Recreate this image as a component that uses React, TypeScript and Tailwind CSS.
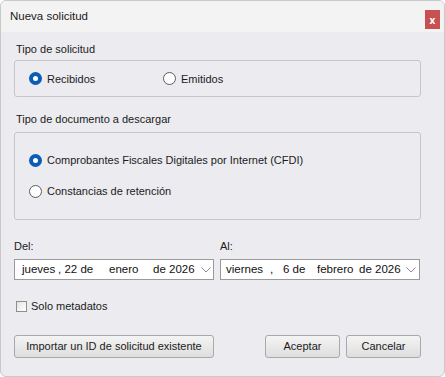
import { useState } from 'react';

const ui = "font-['Liberation_Sans','Noto_Sans',sans-serif]";
const tah = "font-['Liberation_Sans','DejaVu_Sans',sans-serif]";

const Radio = ({ checked, label, onClick }: { checked: boolean; label: string; onClick: () => void }) => (
  <button type="button" onClick={onClick} className="flex items-center gap-[5px] text-left">
    {checked ? (
      <span className="flex h-[13px] w-[13px] items-center justify-center rounded-full bg-[#0a5cb5]">
        <span className="h-[5px] w-[5px] rounded-full bg-white" />
      </span>
    ) : (
      <span className="h-[13px] w-[13px] rounded-full border border-[#5c5c5c] bg-white" />
    )}
    <span className={`${ui} text-[11px] leading-[16px] text-[#1b1b1b]`}>{label}</span>
  </button>
);

const Chevron = () => (
  <svg width="10" height="6" viewBox="0 0 10 6" className="shrink-0">
    <path d="M0.5 0.5 L5 5 L9.5 0.5" fill="none" stroke="#8a8a8a" strokeWidth="1" />
  </svg>
);

const btnClass = `${tah} h-[23px] rounded-[3px] border border-[#a9a9a9] bg-gradient-to-b from-[#f4f4f4] to-[#dedede] text-[11px] text-[#1b1b1b]`;

export default function App() {
  const [origin, setOrigin] = useState<'recibidos' | 'emitidos'>('recibidos');
  const [docType, setDocType] = useState<'cfdi' | 'retencion'>('cfdi');
  const [onlyMeta, setOnlyMeta] = useState(false);

  return (
    <div className="h-[377px] w-[445px] overflow-hidden rounded-[6px] border border-[#c9c9c9] bg-[#ebebf0]">
      {/* title bar */}
      <div className="flex h-[31px] items-center justify-between bg-[#f3f3f3] pl-[9px] pr-[4px]">
        <span className={`${ui} text-[11.5px] text-[#1a1a1a]`}>Nueva solicitud</span>
        <button
          type="button"
          className="mt-[6px] flex h-[19px] w-[15px] items-center justify-center bg-[#c75050] text-[10px] font-bold leading-none text-white"
        >
          x
        </button>
      </div>

      <div className="pl-[13px]">
        <p className={`${ui} mt-[9px] pl-[2px] text-[11px] leading-[16px] text-[#1b1b1b]`}>Tipo de solicitud</p>
        <div className="mt-[3px] flex h-[37px] w-[407px] items-center rounded-[3px] border border-[#c6c6c9] pl-[14px]">
          <div className="w-[134px]">
            <Radio checked={origin === 'recibidos'} label="Recibidos" onClick={() => setOrigin('recibidos')} />
          </div>
          <Radio checked={origin === 'emitidos'} label="Emitidos" onClick={() => setOrigin('emitidos')} />
        </div>

        <p className={`${ui} mt-[14px] pl-[2px] text-[11px] leading-[16px] text-[#1b1b1b]`}>
          Tipo de documento a descargar
        </p>
        <div className="mt-[5px] flex h-[88px] w-[407px] flex-col gap-[15px] rounded-[3px] border border-[#c6c6c9] pl-[14px] pt-[19px]">
          <Radio
            checked={docType === 'cfdi'}
            label="Comprobantes Fiscales Digitales por Internet (CFDI)"
            onClick={() => setDocType('cfdi')}
          />
          <Radio
            checked={docType === 'retencion'}
            label="Constancias de retención"
            onClick={() => setDocType('retencion')}
          />
        </div>

        <div className="mt-[18px] flex gap-[6px]">
          <div className="w-[200px]">
            <p className={`${ui} text-[11px] leading-[16px] text-[#1b1b1b]`}>Del:</p>
            <div className={`${tah} mt-[5px] flex h-[21px] items-center whitespace-pre border border-[#9a9a9a] bg-white pl-[7px] text-[11.5px] text-[#111]`}>
              <span className="w-[36px]">jueves</span>
              <span className="w-[51px]">, 22 de</span>
              <span className="w-[44px]">enero</span>
              <span className="w-[48px]">de 2026</span>
              <Chevron />
            </div>
          </div>
          <div className="w-[200px]">
            <p className={`${ui} text-[11px] leading-[16px] text-[#1b1b1b]`}>Al:</p>
            <div className={`${tah} mt-[5px] flex h-[21px] items-center whitespace-pre border border-[#9a9a9a] bg-white pl-[5px] text-[11.5px] text-[#111]`}>
              <span className="w-[44px]">viernes</span>
              <span className="w-[13px]">,</span>
              <span className="w-[34px]">6 de</span>
              <span className="w-[42px]">febrero</span>
              <span className="w-[47px]">de 2026</span>
              <Chevron />
            </div>
          </div>
        </div>

        <button
          type="button"
          onClick={() => setOnlyMeta(!onlyMeta)}
          className="mt-[18px] flex items-center gap-[4px] pl-[2px]"
        >
          <span className="flex h-[11px] w-[11px] items-center justify-center border border-[#8e8e8e] bg-gradient-to-br from-[#e4e4e4] to-white text-[9px] leading-none">
            {onlyMeta ? '✓' : ''}
          </span>
          <span className={`${ui} text-[11px] leading-[16px] text-[#1b1b1b]`}>Solo metadatos</span>
        </button>

        <div className="mt-[21px] flex w-[407px]">
          <button type="button" className={`${btnClass} w-[200px]`}>
            Importar un ID de solicitud existente
          </button>
          <button type="button" className={`${btnClass} ml-auto w-[75px]`}>
            Aceptar
          </button>
          <button type="button" className={`${btnClass} ml-[6px] w-[75px]`}>
            Cancelar
          </button>
        </div>
      </div>
    </div>
  );
}
